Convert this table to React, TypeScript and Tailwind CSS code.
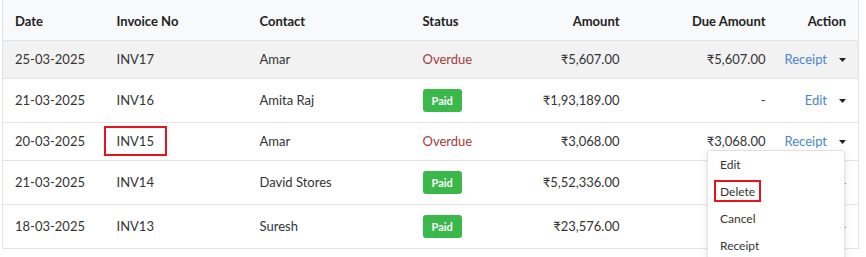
import { ReactNode } from "react";

type Row = {
	date: string;
	invoice: string;
	contact: string;
	status: "Paid" | "Overdue";
	amount: string;
	due: string;
	action: string;
};

const rows: Row[] = [
	{ date: "25-03-2025", invoice: "INV17", contact: "Amar", status: "Overdue", amount: "₹5,607.00", due: "₹5,607.00", action: "Receipt" },
	{ date: "21-03-2025", invoice: "INV16", contact: "Amita Raj", status: "Paid", amount: "₹1,93,189.00", due: "-", action: "Edit" },
	{ date: "20-03-2025", invoice: "INV15", contact: "Amar", status: "Overdue", amount: "₹3,068.00", due: "₹3,068.00", action: "Receipt" },
	{ date: "21-03-2025", invoice: "INV14", contact: "David Stores", status: "Paid", amount: "₹5,52,336.00", due: "", action: "" },
	{ date: "18-03-2025", invoice: "INV13", contact: "Suresh", status: "Paid", amount: "₹23,576.00", due: "", action: "" },
];

const th = "px-3 pt-[12px] pb-[10px] font-bold text-[13px] leading-[18px] text-[#222] whitespace-nowrap";
const td = "px-3 py-[10px] text-[13px] text-[#333] whitespace-nowrap";

function Marked({ children, className }: { children: ReactNode; className: string }) {
	return (
		<span className="relative inline-block">
			{children}
			<span className={`pointer-events-none absolute border-2 border-[#e8141c] ${className}`} />
		</span>
	);
}

function Caret() {
	return (
		<svg width="7" height="4" viewBox="0 0 7 4" className="ml-[12px] inline-block">
			<path d="M0 0h7L3.5 4z" fill="#222" />
		</svg>
	);
}

function StatusCell({ status }: { status: Row["status"] }) {
	if (status === "Paid") {
		return (
			<div className="flex h-[23px] w-fit items-center rounded-[3px] bg-[#3bb84a] px-[9px] text-[11px] font-bold text-white">
				Paid
			</div>
		);
	}
	return <span className="text-[#a23b3b]">Overdue</span>;
}

function Menu() {
	return (
		<div className="absolute right-[1px] top-[17px] z-10 w-[138px] rounded-[3px] border border-[#e2e2e2] bg-white pb-2 text-left leading-[27px] shadow-[0_2px_6px_rgba(0,0,0,0.12)]">
			<div className="px-[12px] h-[27px] text-[12px] text-[#333]">Edit</div>
			<div className="px-[12px] h-[27px] text-[12px] text-[#333]">
				<Marked className="-inset-x-[6px] top-[2px] bottom-[3px]">Delete</Marked>
			</div>
			<div className="px-[12px] h-[27px] text-[12px] text-[#333]">Cancel</div>
			<div className="px-[12px] h-[27px] text-[12px] text-[#333]">Receipt</div>
		</div>
	);
}

export default function App() {
	return (
		<div className="h-[257px] w-[866px] overflow-hidden bg-white pl-[2px] pr-[8px]" style={{ fontFamily: "Lato, 'Open Sans', sans-serif" }}>
			<table className="w-[856px] table-fixed border-collapse border-x border-[#e3e3e3] leading-[17px]">
				<colgroup>
					<col className="w-[102px]" />
					<col className="w-[143px]" />
					<col className="w-[163px]" />
					<col className="w-[90px]" />
					<col className="w-[131px]" />
					<col className="w-[146px]" />
					<col className="w-[81px]" />
				</colgroup>
				<thead>
					<tr className="bg-[#f8f9fa] border-b border-[#e3e3e3]">
						<th className={`${th} text-left`}>Date</th>
						<th className={`${th} text-left`}>Invoice No</th>
						<th className={`${th} text-left`}>Contact</th>
						<th className={`${th} text-left`}>Status</th>
						<th className={`${th} text-right`}>Amount</th>
						<th className={`${th} text-right`}>Due Amount</th>
						<th className={`${th} text-right`}>Action</th>
					</tr>
				</thead>
				<tbody>
					{rows.map((r, i) => (
						<tr key={r.invoice} className={`border-b border-[#e3e3e3] ${i === 0 ? "bg-[#f2f2f2]" : "bg-white"}`}>
							<td className={td}>{r.date}</td>
							<td className={td}>
								{r.invoice === "INV15" ? (
									<Marked className="-inset-x-[13px] -top-[7px] -bottom-[6px]">{r.invoice}</Marked>
								) : (
									r.invoice
								)}
							</td>
							<td className={td}>{r.contact}</td>
							<td className={td}>
								<StatusCell status={r.status} />
							</td>
							<td className={`${td} text-right`}>{r.amount}</td>
							<td className={`${td} text-right`}>{r.due}</td>
							<td className={`${td} !pl-0 text-right`}>
								<span className="relative inline-flex items-center">
									{r.action && <span className="text-[#4a86c8]">{r.action}</span>}
									<Caret />
									{r.invoice === "INV15" && <Menu />}
								</span>
							</td>
						</tr>
					))}
				</tbody>
			</table>
		</div>
	);
}
